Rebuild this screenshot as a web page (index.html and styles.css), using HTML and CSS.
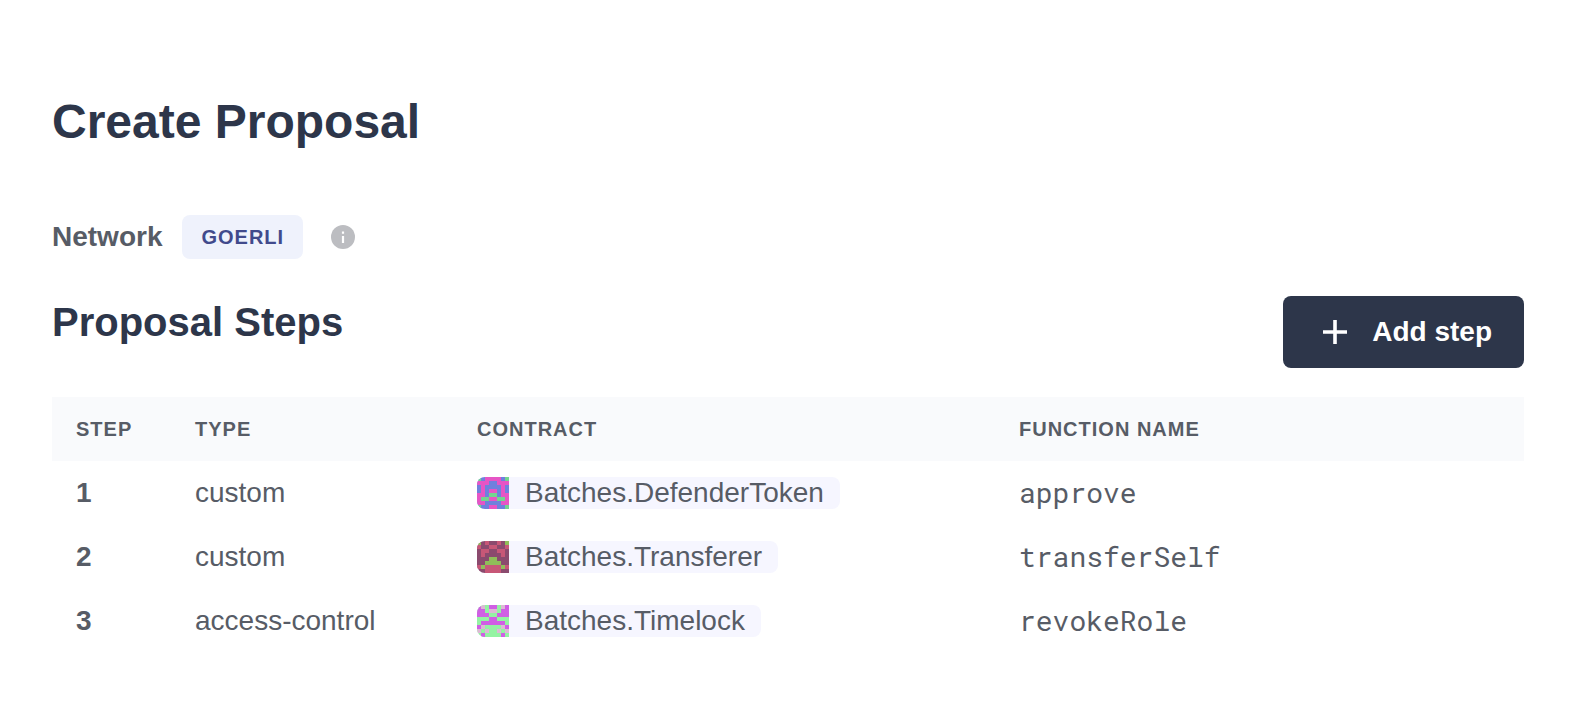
FILE: index.html
```
<!DOCTYPE html>
<html lang="en">
<head>
<meta charset="utf-8">
<meta name="viewport" content="width=device-width, initial-scale=1">
<title>Create Proposal</title>
<link rel="stylesheet" href="styles.css">
</head>
<body>
<main class="page">
  <h1 class="page-title">Create Proposal</h1>
  <div class="network">
    <span class="network-label">Network</span>
    <span class="network-badge">GOERLI</span>
    <svg class="info-icon" viewBox="0 0 24 24" role="img" aria-label="Network information"><circle cx="12" cy="12" r="12" fill="#bcbdc1"/><path d="M12 11v7M12 6.5v2.2" stroke="#fff" stroke-width="2.2"/></svg>
  </div>
  <div class="section-head">
    <h2 class="section-title">Proposal Steps</h2>
    <button class="add-button" type="button">
      <svg class="plus-icon" viewBox="0 0 26 26" aria-hidden="true"><path d="M13 1v24M1 13h24" stroke="currentColor" stroke-width="3.6"/></svg>
      Add step
    </button>
  </div>
  <table class="steps">
    <thead>
      <tr><th class="col-step">Step</th><th class="col-type">Type</th><th class="col-contract">Contract</th><th>Function name</th></tr>
    </thead>
    <tbody>
      <tr>
        <td class="step-number">1</td><td>custom</td>
        <td><span class="contract"><svg class="identicon" viewBox="0 0 8 8" shape-rendering="crispEdges" aria-hidden="true"><path fill="#6f80dd" d="M0 0h8v8H0z"/><path fill="#e655c5" d="M2 0h4v1H2zM0 1h3v1H0zM5 1h3v1H5zM1 2h1v2H1zM6 2h1v2H6zM3 3h2v1H3zM0 4h2v1H0zM6 4h2v1H6zM0 5h1v1H0zM7 5h1v1H7zM3 5h2v1H3zM0 6h2v1H0zM6 6h2v1H6zM3 7h2v1H3z"/><path fill="#73d58f" d="M0 0h1v1H0zM7 0h1v1H7zM3 4h2v1H3zM1 5h2v1H1zM5 5h2v1H5zM0 7h1v1H0zM7 7h1v1H7z"/></svg><span class="contract-name">Batches.DefenderToken</span></span></td>
        <td class="function-name">approve</td>
      </tr>
      <tr>
        <td class="step-number">2</td><td>custom</td>
        <td><span class="contract"><svg class="identicon" viewBox="0 0 8 8" shape-rendering="crispEdges" aria-hidden="true"><path fill="#8b4a6e" d="M0 0h8v8H0z"/><path fill="#c75777" d="M2 0h1v1H2zM5 0h1v1H5zM0 1h1v1H0zM3 1h2v1H3zM7 1h1v1H7zM1 2h2v1H1zM5 2h2v1H5zM1 3h1v1H1zM6 3h1v1H6zM0 6h1v1H0zM2 6h4v2H2zM7 6h1v1H7z"/><path fill="#90bd59" d="M0 0h1v1H0zM7 0h1v1H7zM3 4h2v1H3zM2 5h4v1H2zM1 6h1v1H1zM6 6h1v1H6z"/></svg><span class="contract-name">Batches.Transferer</span></span></td>
        <td class="function-name">transferSelf</td>
      </tr>
      <tr>
        <td class="step-number">3</td><td>access-control</td>
        <td><span class="contract"><svg class="identicon" viewBox="0 0 8 8" shape-rendering="crispEdges" aria-hidden="true"><path fill="#94f3a3" d="M0 0h8v8H0z"/><path fill="#d05fe4" d="M0 0h1v1H0zM7 0h1v1H7zM3 0h2v1H3zM0 1h2v1H0zM6 1h2v1H6zM0 2h3v1H0zM5 2h3v1H5zM3 3h2v1H3zM1 4h6v1H1zM0 5h1v1H0zM7 5h1v1H7zM1 7h1v1H1zM6 7h1v1H6z"/><path fill="#ddb9d5" d="M1 0h1v1H1zM6 0h1v1H6zM3 1h2v1H3zM1 5h1v1H1zM6 5h1v1H6zM2 6h1v1H2zM5 6h1v1H5zM0 6h1v1H0zM7 6h1v1H7z"/></svg><span class="contract-name">Batches.Timelock</span></span></td>
        <td class="function-name">revokeRole</td>
      </tr>
    </tbody>
  </table>
</main>
</body>
</html>
```
FILE: styles.css
```
* { box-sizing: border-box; }

body {
  margin: 0;
  background: #fff;
  color: #575c66;
  font: 28px/32px "Liberation Sans", Arial, sans-serif;
}

.page { padding: 92px 52px 48px; }

.page-title,
.section-title {
  margin: 0;
  color: #2d364a;
  font-weight: 700;
}

.page-title { font-size: 48px; line-height: 60px; }
.section-title { font-size: 40px; line-height: 52px; }

.network {
  display: flex;
  align-items: center;
  margin-top: 63px;
}

.network-label { font-weight: 700; }

.network-badge {
  margin: 0 28px 0 20px;
  padding: 6px 19px;
  border-radius: 8px;
  background: #eff2fc;
  color: #414a8c;
  font-size: 20px;
  font-weight: 700;
  letter-spacing: 1px;
}

.info-icon { width: 24px; height: 24px; }

.section-head {
  display: flex;
  align-items: flex-start;
  justify-content: space-between;
  margin: 37px 0 29px;
}

.add-button {
  display: flex;
  align-items: center;
  gap: 24px;
  padding: 20px 32px 20px 39px;
  border: 0;
  border-radius: 8px;
  background: #2d364a;
  color: #fff;
  font: inherit;
  font-weight: 700;
}

.plus-icon { width: 26px; height: 26px; }

.steps {
  width: 100%;
  border-collapse: collapse;
  table-layout: fixed;
  text-align: left;
}

.steps thead { background: #f9fafc; }

.steps th {
  padding: 16px 0;
  font-size: 20px;
  letter-spacing: 1px;
  text-transform: uppercase;
}

.steps td { padding: 16px 0; }
.steps th:first-child, .steps td:first-child { padding-left: 24px; }

.col-step { width: 143px; }
.col-type { width: 282px; }
.col-contract { width: 542px; }

.step-number { font-weight: 700; }

.contract {
  display: flex;
  width: max-content;
  overflow: hidden;
  border-radius: 8px;
  background: #f6f6ff;
}

.contract-name { padding: 0 16px; }
.identicon { width: 32px; height: 32px; }

.steps .function-name {
  font-family: "Roboto Mono", "DejaVu Sans Mono", "Liberation Mono", monospace;
}
```
